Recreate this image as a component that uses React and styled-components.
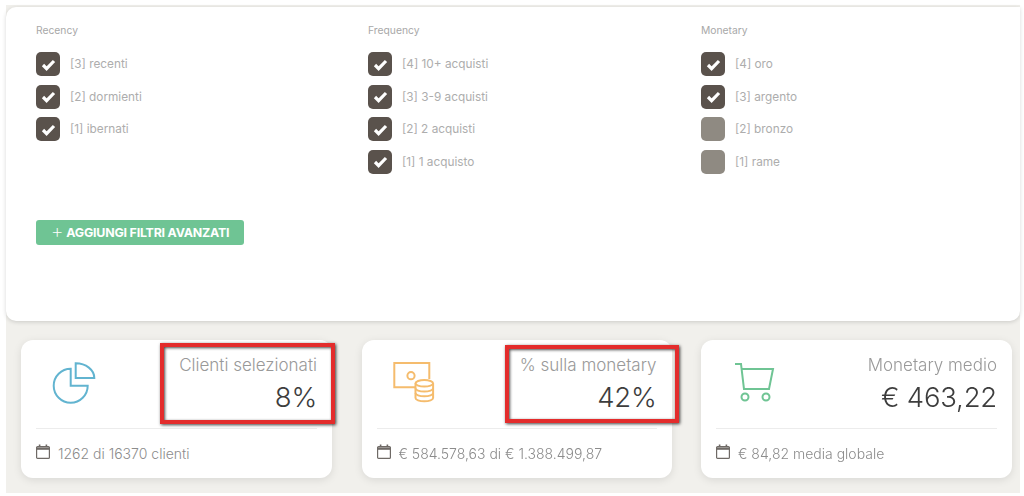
import styled, { createGlobalStyle } from "styled-components";

const GlobalStyle = createGlobalStyle`
  html, body {
    margin: 0;
    padding: 0;
    background: #fff;
    font-family: "Inter", "Open Sans", sans-serif;
  }
`;

const Page = styled.main`
  position: relative;
  box-sizing: border-box;
  width: 1014px;
  height: 488px;
  margin: 5px 0 0 6px;
  padding-top: 2px;
  background: #f1f0ec;
  filter: blur(0.4px);
`;

const FilterPanel = styled.section`
  box-sizing: border-box;
  height: 314px;
  padding: 16px 30px 0;
  background: #fff;
  border-radius: 10px 0 10px 10px;
  box-shadow: 0 1px 4px rgba(0, 0, 0, 0.16);
`;

const Columns = styled.div`
  display: grid;
  grid-template-columns: 332px 333px 1fr;
`;

const ColumnTitle = styled.div`
  height: 14px;
  margin-bottom: 15px;
  font-size: 10.3px;
  line-height: 14px;
  color: #a8a8a8;
`;

const OptionList = styled.div`
  display: flex;
  flex-direction: column;
  gap: 8.5px;
`;

const Option = styled.label`
  display: flex;
  align-items: center;
  gap: 10px;
  height: 24px;
  font-size: 11.8px;
  color: #adadad;
`;

const Check = styled.span`
  display: flex;
  align-items: center;
  justify-content: center;
  width: 24px;
  height: 24px;
  border-radius: 5px;
  background: ${(p) => (p.$on ? "#5a524c" : "#8f8a82")};
`;

const AddButton = styled.button`
  display: flex;
  align-items: center;
  justify-content: center;
  gap: 3px;
  width: 208px;
  height: 25px;
  margin-top: 46px;
  padding: 0;
  border: 0;
  border-radius: 3px;
  background: #6fc494;
  color: #fff;
  font-family: inherit;
  font-size: 12.4px;
  font-weight: 700;
  letter-spacing: -0.2px;
`;

const Plus = styled.span`
  font-size: 20px;
  font-weight: 200;
  line-height: 1;
  margin-top: -2px;
`;

const Cards = styled.div`
  display: grid;
  grid-template-columns: 311px 310px 311px;
  gap: 30px 29.5px;
  margin: 19px 0 0 15px;
`;

const Card = styled.article`
  box-sizing: border-box;
  height: 138px;
  padding: 0 15px;
  background: #fff;
  border-radius: 12px;
  box-shadow: 0 2px 8px rgba(0, 0, 0, 0.1);
`;

const CardTop = styled.div`
  display: flex;
  justify-content: space-between;
  height: 88px;
  border-bottom: 1px solid #ececec;
`;

const IconBox = styled.div`
  width: 44px;
  height: 44px;
  margin: 20px 0 0 ${(p) => p.$left}px;
`;

const Stat = styled.div`
  padding-top: 15px;
  text-align: right;
`;

const StatTitle = styled.div`
  font-size: 17px;
  font-weight: 300;
  line-height: 20px;
  color: #999;
`;

const StatValue = styled.div`
  margin-top: 6px;
  font-size: 27.5px;
  font-weight: 300;
  line-height: 32px;
  letter-spacing: -0.2px;
  color: #3d3d3d;
`;

const CardFooter = styled.div`
  display: flex;
  align-items: center;
  gap: 7px;
  height: 49px;
  font-size: 14px;
  font-weight: 300;
  color: #8c8c8c;
`;

const CalendarSvg = styled.svg`
  flex: none;
  margin: -4px 0 0 -1px;
`;

// red annotation frames drawn on top of the screenshot
const Highlight = styled.div`
  position: absolute;
  box-sizing: border-box;
  left: ${(p) => p.$x}px;
  top: ${(p) => p.$y}px;
  width: ${(p) => p.$w}px;
  height: ${(p) => p.$h}px;
  border: 4px solid #e32c2c;
  box-shadow: 1px 1px 3px rgba(0, 0, 0, 0.75), inset 1px 1px 3px rgba(0, 0, 0, 0.7);
`;

const Tick = () => (
  <svg width="15" height="13" viewBox="0 0 15 13" fill="none">
    <path d="M2 7l3.6 3.6L13 3" stroke="#fff" strokeWidth="3.2" />
  </svg>
);

const CalendarIcon = () => (
  <CalendarSvg width="16" height="16" viewBox="0 0 16 16" fill="none" stroke="#6f6a66" strokeWidth="1.2">
    <rect x="1.6" y="2.6" width="12.8" height="11.8" rx="1" />
    <path d="M1.6 4.600h12.8" strokeWidth="2.400" />
    <path d="M4.600 .5v2.500M11.400 .5v2.500" strokeWidth="1.600" />
  </CalendarSvg>
);

const PieIcon = () => (
  <svg width="44" height="44" viewBox="0 0 44 44" fill="none" stroke="#62b4d0" strokeWidth="2">
    <path d="M18.700 8.700A17 17 0 1 0 35.700 25.700H18.700Z" />
    <path d="M23.700 3.300V18H42.300A18.600 14.700 0 0 0 23.700 3.300Z" />
  </svg>
);

const MoneyIcon = () => (
  <svg width="44" height="44" viewBox="0 0 44 44" fill="none" stroke="#f5bc6d" strokeWidth="2">
    <path d="M22 27.300H1.300V3H36.300V19" />
    <circle cx="18" cy="15.700" r="3.600" />
    <ellipse cx="31.300" cy="23.300" rx="8.800" ry="3.300" />
    <path d="M22.500 23.300V38c0 1.800 3.900 3.300 8.800 3.300s8.800-1.500 8.800-3.300V23.300" />
    <path d="M22.500 28.300c0 1.800 3.900 3.300 8.800 3.300s8.800-1.500 8.800-3.300M22.500 33c0 1.800 3.900 3.300 8.800 3.300s8.800-1.500 8.800-3.300" />
  </svg>
);

const CartIcon = () => (
  <svg width="44" height="44" viewBox="0 0 44 44" fill="none" stroke="#6fc494" strokeWidth="2">
    <path d="M1 4h6l3 25h25l4-20H8" />
    <circle cx="11" cy="37" r="3.500" />
    <circle cx="32" cy="37" r="3.500" />
  </svg>
);

const filters = [
  {
    title: "Recency",
    options: [
      ["[3] recenti", true],
      ["[2] dormienti", true],
      ["[1] ibernati", true],
    ],
  },
  {
    title: "Frequency",
    options: [
      ["[4] 10+ acquisti", true],
      ["[3] 3-9 acquisti", true],
      ["[2] 2 acquisti", true],
      ["[1] 1 acquisto", true],
    ],
  },
  {
    title: "Monetary",
    options: [
      ["[4] oro", true],
      ["[3] argento", true],
      ["[2] bronzo", false],
      ["[1] rame", false],
    ],
  },
];

const stats = [
  { icon: <PieIcon />, left: 16, title: "Clienti selezionati", value: "8%", foot: "1262 di 16370 clienti" },
  { icon: <MoneyIcon />, left: 16, title: "% sulla monetary", value: "42%", foot: "€ 584.578,63 di € 1.388.499,87" },
  { icon: <CartIcon />, left: 18, title: "Monetary medio", value: "€ 463,22", foot: "€ 84,82 media globale" },
];

const App = () => (
  <>
    <GlobalStyle />
    <Page>
      <FilterPanel>
        <Columns>
          {filters.map((col) => (
            <div key={col.title}>
              <ColumnTitle>{col.title}</ColumnTitle>
              <OptionList>
                {col.options.map(([label, on]) => (
                  <Option key={label}>
                    <Check $on={on}>{on && <Tick />}</Check>
                    {label}
                  </Option>
                ))}
              </OptionList>
            </div>
          ))}
        </Columns>
        <AddButton>
          <Plus>+</Plus> AGGIUNGI FILTRI AVANZATI
        </AddButton>
      </FilterPanel>
      <Cards>
        {stats.map((s) => (
          <Card key={s.title}>
            <CardTop>
              <IconBox $left={s.left}>{s.icon}</IconBox>
              <Stat>
                <StatTitle>{s.title}</StatTitle>
                <StatValue>{s.value}</StatValue>
              </Stat>
            </CardTop>
            <CardFooter>
              <CalendarIcon />
              {s.foot}
            </CardFooter>
          </Card>
        ))}
      </Cards>
      <Highlight $x={154} $y={338} $w={175} $h={81} />
      <Highlight $x={499} $y={340} $w={174} $h={78} />
    </Page>
  </>
);

export default App;
